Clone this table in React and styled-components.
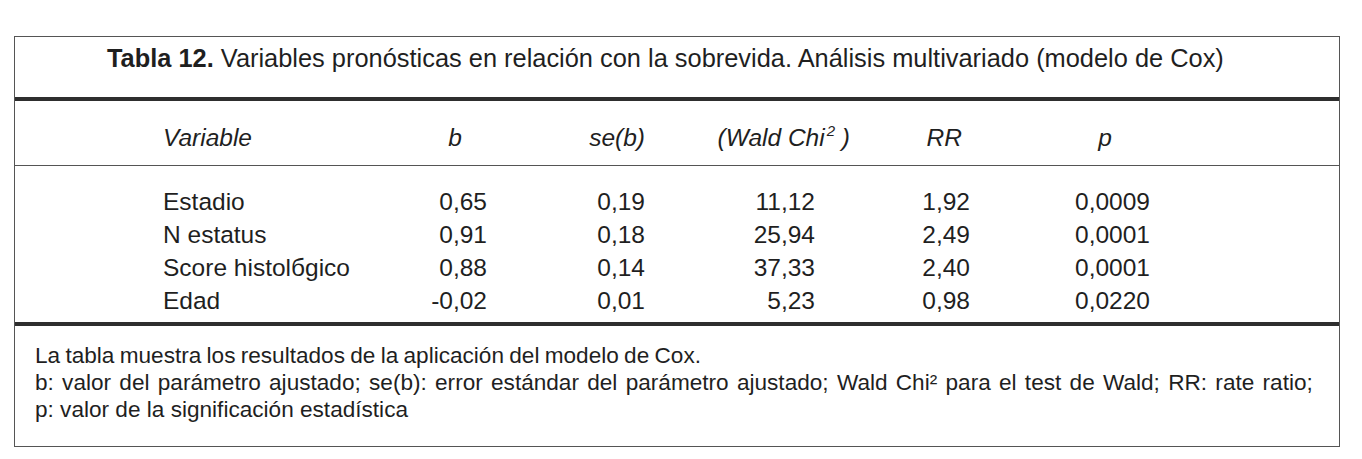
import React from 'react';
import styled, { createGlobalStyle } from 'styled-components';

const Global = createGlobalStyle`
  html, body { margin: 0; padding: 0; background: #fff; }
  body { font-family: "Liberation Sans", Arial, sans-serif; color: #1f1f1f; }
`;

const Page = styled.div`
  width: 1362px;
  height: 459px;
  box-sizing: border-box;
  padding: 36px 0 0 14px;
`;

const Frame = styled.section`
  width: 1326px;
  box-sizing: border-box;
  border: 1px solid #555;
  display: flex;
  flex-direction: column;
`;

const Caption = styled.h2`
  margin: 0;
  height: 60px;
  box-sizing: border-box;
  padding: 6px 0 0 92px;
  font-size: 25.4px;
  line-height: 30px;
  font-weight: normal;
  white-space: nowrap;
`;

const Strong = styled.b`
  font-weight: bold;
`;

const Rule = styled.div`
  height: ${p => p.$h}px;
  background: ${p => p.$c};
`;

const Grid = styled.div`
  display: grid;
  grid-template-columns: 237px 87px 158px 205px 120px 180px;
  padding-left: 148px;
  padding-top: ${p => p.$pt}px;
  padding-bottom: ${p => p.$pb}px;
  line-height: ${p => p.$lh}px;
  font-size: 24.5px;
  font-style: ${p => (p.$italic ? 'italic' : 'normal')};
`;

const Cell = styled.div`
  text-align: ${p => p.$align || 'right'};
  padding-right: ${p => p.$pr || 0}px;
  white-space: nowrap;
`;

const Sup = styled.sup`
  font-size: 15px;
  vertical-align: 10px;
  line-height: 0;
  margin-left: 2px;
`;

const Notes = styled.div`
  padding: 16px 0 23px 20px;
  font-size: 22.6px;
  line-height: 27px;
`;

const Line = styled.p`
  margin: 0;
  white-space: nowrap;
  word-spacing: ${p => p.$ws || 0}px;
`;

const header = [
  { t: 'Variable', align: 'left' },
  { t: 'b', pr: 25 },
  { t: 'se(b)' },
  { t: 'wald' },
  { t: 'RR', pr: 8 },
  { t: 'p', pr: 38 },
];

const rows = [
  ['Estadio', '0,65', '0,19', '11,12', '1,92', '0,0009'],
  ['N estatus', '0,91', '0,18', '25,94', '2,49', '0,0001'],
  ['Score histolбgico', '0,88', '0,14', '37,33', '2,40', '0,0001'],
  ['Edad', '-0,02', '0,01', '5,23', '0,98', '0,0220'],
];

const valuePad = [0, 0, 0, 35, 0, 0];

export default function App() {
  return (
    <Page>
      <Global />
      <Frame>
        <Caption>
          <Strong>Tabla 12.</Strong> Variables pronósticas en relación con la sobrevida. Análisis multivariado (modelo de Cox)
        </Caption>
        <Rule $h={4} $c="#2e2e2e" />
        <Grid $italic $pt={25} $pb={15} $lh={24}>
          {header.map((h, i) => (
            <Cell key={i} $align={h.align} $pr={h.pr}>
              {h.t === 'wald' ? (
                <>
                  (Wald Chi<Sup>2</Sup> )
                </>
              ) : (
                h.t
              )}
            </Cell>
          ))}
        </Grid>
        <Rule $h={1} $c="#555" />
        <Grid $pt={19} $pb={5} $lh={33}>
          {rows.map((r, ri) =>
            r.map((v, ci) => (
              <Cell key={ri + '-' + ci} $align={ci === 0 ? 'left' : 'right'} $pr={valuePad[ci]}>
                {v}
              </Cell>
            ))
          )}
        </Grid>
        <Rule $h={4} $c="#2e2e2e" />
        <Notes>
          <Line $ws={-1}>La tabla muestra los resultados de la aplicación del modelo de Cox.</Line>
          <Line $ws={2}>
            b: valor del parámetro ajustado; se(b): error estándar del parámetro ajustado; Wald Chi² para el test de Wald; RR: rate ratio;
          </Line>
          <Line>p: valor de la significación estadística</Line>
        </Notes>
      </Frame>
    </Page>
  );
}
